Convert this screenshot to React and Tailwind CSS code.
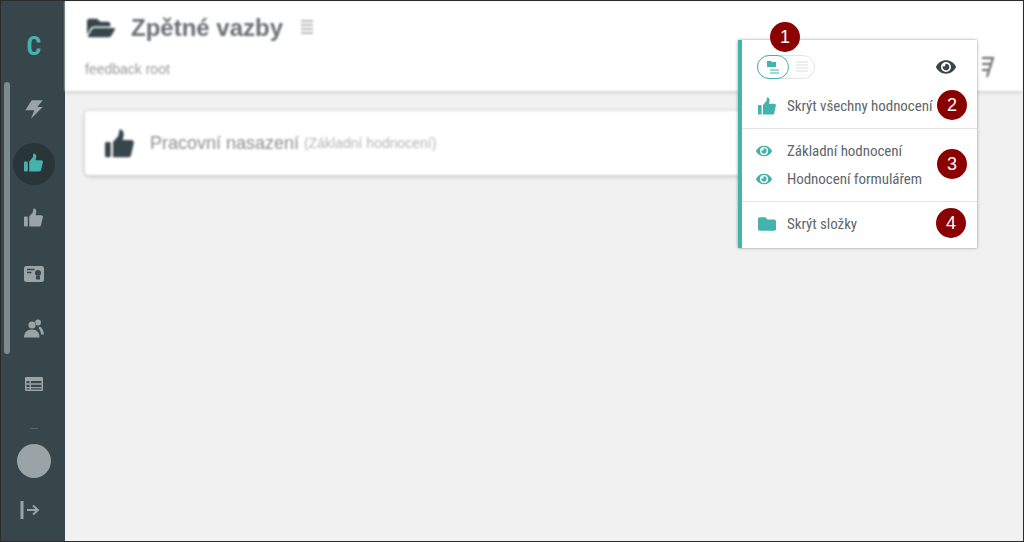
import React from "react";
import { FaEye, FaFolder, FaFolderOpen } from "react-icons/fa";

const Thumb = ({ size = 18, className }) => (
    <svg width={size} height={size} viewBox="0 0 20 20" className={className}>
        <rect x="0" y="9" width="4" height="10.500" rx="1" fill="currentColor" />
        <path d="M5.500 9 9 5C9.600 4 9.600 2 10 .5c1.800-.5 3.300 1.500 2.800 4L12.200 7.500H18c1.500 0 2.200 1.300 1.800 2.500L18 18c-.2 1-1 1.500-2 1.500H5.500Z" fill="currentColor" />
    </svg>
);

const Bolt = () => (
    <svg width="18" height="20" viewBox="0 0 18 20">
        <path d="M6.700 1.300H17.700L12.300 8H17.700L6 19.700 9.300 11.300H.3Z" fill="currentColor" />
    </svg>
);

const CertIcon = () => (
    <svg width="20" height="16" viewBox="0 0 20 16">
        <rect width="20" height="16" rx="2.500" fill="currentColor" />
        <path d="M3 3.500h7.500M3 6.500h4.500" stroke="#37464b" strokeWidth="1.300" />
        <circle cx="14" cy="7" r="3" fill="#37464b" />
        <path d="M12 10h4v3.500h-4z" fill="#37464b" />
    </svg>
);

const Users = () => (
    <svg width="20" height="19" viewBox="0 0 20 19">
        <circle cx="14" cy="3.500" r="3" fill="currentColor" />
        <path d="M15.500 7.500c2.500.8 4 4 4.500 8h-3c-.3-3-1-5-2.500-6.500Z" fill="currentColor" />
        <circle cx="8" cy="6" r="4" fill="#37464b" />
        <circle cx="8" cy="6" r="3.600" fill="currentColor" />
        <path d="M0 18.500c0-5 3-8 8-8s7.500 3 7.500 8Z" fill="currentColor" />
    </svg>
);

const TableIcon = () => (
    <svg width="18" height="14" viewBox="0 0 18 14">
        <path d="M1 0h16a1 1 0 0 1 1 1v12a1 1 0 0 1-1 1H1a1 1 0 0 1-1-1V1a1 1 0 0 1 1-1Z" fill="currentColor" />
        <path d="M1.500 4h3v2.300h-3zM6 4h10.500v2.300H6zM1.500 7.800h3v2.300h-3zM6 7.800h10.500v2.300H6zM1.500 11.300h3v1.200h-3zM6 11.300h10.500v1.200H6z" fill="#37464b" />
    </svg>
);

const NavIcon = ({ children, active }) => (
    <div className={`flex h-[55px] items-center justify-center ${active ? "text-[#45b3ad]" : "text-[#9aa4a6]"}`}>
        {active ? (
            <div className="flex h-[42px] w-[42px] items-center justify-center rounded-full bg-[#2a3539]">{children}</div>
        ) : children}
    </div>
);

const Lines = ({ className, gap = 3, count = 4 }) => (
    <svg width="12" height={count * gap + 1} viewBox={`0 0 12 ${count * gap + 1}`} className={className}>
        {Array.from({ length: count }).map((_, i) => (
            <path key={i} d={`M0 ${i * gap + 1}h12`} stroke="currentColor" strokeWidth="1" />
        ))}
    </svg>
);

const Badge = ({ n, className }) => (
    <div className={`absolute flex h-[30px] w-[30px] items-center justify-center rounded-full bg-[#8b0000] text-[18px] text-white [font-family:'Liberation_Sans',sans-serif] ${className}`}>
        {n}
    </div>
);

const MenuRow = ({ icon, label }) => (
    <div className="flex h-[20px] items-center">
        <div className="flex w-[45px] shrink-0 justify-center pl-[4px] text-[#45b3ad]">{icon}</div>
        <span className="text-[15px] leading-[20px] tracking-[-0.05px] whitespace-nowrap text-[#60676b] [font-stretch:75%]">{label}</span>
    </div>
);

export default function App() {
    return (
        <div className="relative flex h-[542px] w-[1024px] overflow-hidden border border-[#2b2b2b] bg-[#f1f1f1] [font-family:Roboto,sans-serif]">
            <aside className="relative flex w-[64px] shrink-0 flex-col bg-[#37464b]">
                <div className="absolute left-[3px] top-[81px] h-[272px] w-[6px] rounded-full bg-[#7f8a8c]" />
                <div className="flex h-[80px] items-center justify-center pl-[2px] pt-[11px] text-[26px] font-bold text-[#45b3ad] [font-stretch:75%]">C</div>
                <div className="flex flex-col pl-[2px]">
                    <NavIcon><Bolt /></NavIcon>
                    <NavIcon active><Thumb size={19} className="-ml-[1px] -mt-[2px]" /></NavIcon>
                    <NavIcon><Thumb size={19} className="-ml-[1px] -mt-[3px]" /></NavIcon>
                    <NavIcon><CertIcon /></NavIcon>
                    <NavIcon><Users /></NavIcon>
                    <NavIcon><TableIcon /></NavIcon>
                </div>
                <div className="mt-[17px] flex flex-col items-center pl-[2px]">
                    <div className="h-px w-[8px] bg-[#566569]" />
                    <div className="mt-[15px] h-[34px] w-[34px] rounded-full bg-[#9aa4a6]" />
                    <svg width="20" height="18" viewBox="0 0 20 18" className="-ml-[9px] mt-[23px] text-[#9aa4a6]">
                        <path d="M2 0v18" stroke="currentColor" strokeWidth="3" />
                        <path d="M7 9h11M13 4.500 18 9l-5 4.500" stroke="currentColor" strokeWidth="2" fill="none" />
                    </svg>
                </div>
            </aside>

            <main className="flex min-w-0 flex-1 flex-col blur-[1.2px] [font-family:'Liberation_Sans',sans-serif]">
                <header className="h-[90px] shrink-0 bg-white pl-[20px] pt-[9px] shadow-[0_1px_4px_rgba(0,0,0,0.2)]">
                    <div className="flex items-center">
                        <FaFolderOpen size={28} className="ml-[2px] text-[#37464b]" />
                        <h1 className="ml-[16px] text-[24px] font-bold text-[#6a6f73]">Zpětné vazby</h1>
                        <Lines gap={4} className="ml-[18px] text-[#777]" />
                    </div>
                    <p className="mt-[13px] text-[14px] text-[#9a9a9a]">feedback root</p>
                </header>
                <section className="ml-[20px] mt-[20px] flex h-[64px] w-[700px] items-center rounded-[4px] bg-white pl-[20px] shadow-[0_1px_4px_rgba(0,0,0,0.25)]">
                    <Thumb size={29} className="text-[#37464b]" />
                    <span className="ml-[16px] pt-px text-[18px] text-[#8f8f8f]">Pracovní nasazení</span>
                    <span className="ml-[5px] pt-px text-[14px] text-[#b5b5b5]">(Základní hodnocení)</span>
                </section>
            </main>

            <svg width="16" height="26" viewBox="0 0 16 26" className="absolute left-[978px] top-[52px] text-[#666] blur-[1px]">
                <path d="M3 5h11L8 24M3 11h8M3 17h6" stroke="currentColor" strokeWidth="2" fill="none" />
            </svg>

            <div className="absolute left-[737px] top-[39px] w-[239px] border-l-[4px] border-[#45b3ad] bg-white shadow-[0_0_3px_rgba(0,0,0,0.4)]">
                <div className="flex h-[89px] flex-col border-b border-[#e2e2e2]">
                    <div className="flex items-center justify-between pl-[15px] pr-[21px] pt-[15px]">
                        <div className="flex h-[24px] w-[58px] rounded-full border border-[#e3e3e3]">
                            <div className="-my-px -ml-px flex h-[24px] w-[32px] items-center justify-center rounded-full border border-[#45b3ad] text-[#45b3ad]">
                                <svg width="14" height="14" viewBox="0 0 14 14">
                                    <path d="M1 1h4l1 1h4v5H1z" fill="currentColor" />
                                    <path d="M4 10h9M4 13h9" stroke="currentColor" strokeWidth="1" />
                                </svg>
                            </div>
                            <div className="flex flex-1 items-center justify-center text-[#dddddd]"><Lines /></div>
                        </div>
                        <FaEye size={20} className="text-[#37464b]" />
                    </div>
                    <div className="mt-[17px]">
                        <MenuRow icon={<Thumb size={18} />} label="Skrýt všechny hodnocení" />
                    </div>
                </div>
                <div className="flex h-[73px] flex-col justify-center gap-[8px] border-b border-[#e2e2e2] pb-[1px]">
                    <MenuRow icon={<FaEye size={16} className="-ml-[5px]" />} label="Základní hodnocení" />
                    <MenuRow icon={<FaEye size={16} className="-ml-[5px]" />} label="Hodnocení formulářem" />
                </div>
                <div className="flex h-[46px] items-center pb-[2px]">
                    <MenuRow icon={<FaFolder size={18} />} label="Skrýt složky" />
                </div>
            </div>

            <Badge n="1" className="left-[769px] top-[21px]" />
            <Badge n="2" className="left-[936px] top-[89px]" />
            <Badge n="3" className="left-[936px] top-[148px]" />
            <Badge n="4" className="left-[935px] top-[207px]" />
        </div>
    );
}
